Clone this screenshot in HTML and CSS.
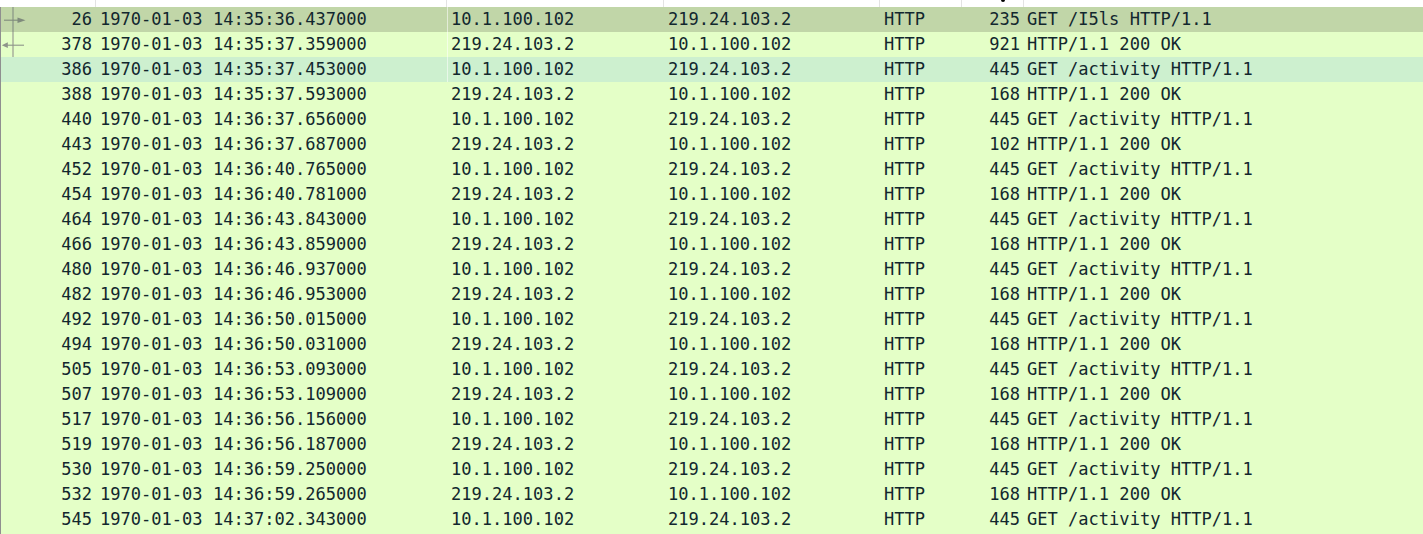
FILE: index.html
```html
<!DOCTYPE html>
<html>
<head>
<meta charset="utf-8">
<link rel="stylesheet" href="styles.css">
</head>
<body>
<div class="header">
  <div class="h"></div><div class="h"></div><div class="h"></div><div class="h"></div><div class="h"></div><div class="h hlen"><span class="dot"></span></div><div class="h hinfo"></div>
</div>
<div class="list">
  <div class="row sel line">
    <span class="c no"><svg class="rel" width="26" height="25" viewBox="0 0 26 25"><line x1="12" y1="0" x2="12" y2="25" stroke="#8d9888" stroke-width="1.3"/><line x1="3" y1="13.2" x2="18" y2="13.2" stroke="#7f8a7c" stroke-width="1.1"/><polygon points="24.5,13.2 16.5,10.5 16.5,16" fill="#7f8a7c"/></svg>26</span>
    <span class="c time">1970-01-03 14:35:36.437000</span><span class="c src">10.1.100.102</span><span class="c dst">219.24.103.2</span><span class="c proto">HTTP</span><span class="c len">235</span><span class="c info">GET /I5ls HTTP/1.1</span>
  </div>
  <div class="row line">
    <span class="c no"><svg class="rel" width="26" height="25" viewBox="0 0 26 25"><line x1="12" y1="0" x2="12" y2="25" stroke="#9ea497" stroke-width="1.3"/><line x1="6" y1="13.2" x2="23" y2="13.2" stroke="#8e948a" stroke-width="1.1"/><polygon points="0.8,13.2 6.8,10.3 6.8,16" fill="#8e948a"/></svg>378</span>
    <span class="c time">1970-01-03 14:35:37.359000</span><span class="c src">219.24.103.2</span><span class="c dst">10.1.100.102</span><span class="c proto">HTTP</span><span class="c len">921</span><span class="c info">HTTP/1.1 200 OK</span>
  </div>
  <div class="row hover line">
    <span class="c no">386</span><span class="c time">1970-01-03 14:35:37.453000</span><span class="c src">10.1.100.102</span><span class="c dst">219.24.103.2</span><span class="c proto">HTTP</span><span class="c len">445</span><span class="c info">GET /activity HTTP/1.1</span>
  </div>
  <div class="row"><span class="c no">388</span><span class="c time">1970-01-03 14:35:37.593000</span><span class="c src">219.24.103.2</span><span class="c dst">10.1.100.102</span><span class="c proto">HTTP</span><span class="c len">168</span><span class="c info">HTTP/1.1 200 OK</span></div>
  <div class="row"><span class="c no">440</span><span class="c time">1970-01-03 14:36:37.656000</span><span class="c src">10.1.100.102</span><span class="c dst">219.24.103.2</span><span class="c proto">HTTP</span><span class="c len">445</span><span class="c info">GET /activity HTTP/1.1</span></div>
  <div class="row"><span class="c no">443</span><span class="c time">1970-01-03 14:36:37.687000</span><span class="c src">219.24.103.2</span><span class="c dst">10.1.100.102</span><span class="c proto">HTTP</span><span class="c len">102</span><span class="c info">HTTP/1.1 200 OK</span></div>
  <div class="row"><span class="c no">452</span><span class="c time">1970-01-03 14:36:40.765000</span><span class="c src">10.1.100.102</span><span class="c dst">219.24.103.2</span><span class="c proto">HTTP</span><span class="c len">445</span><span class="c info">GET /activity HTTP/1.1</span></div>
  <div class="row"><span class="c no">454</span><span class="c time">1970-01-03 14:36:40.781000</span><span class="c src">219.24.103.2</span><span class="c dst">10.1.100.102</span><span class="c proto">HTTP</span><span class="c len">168</span><span class="c info">HTTP/1.1 200 OK</span></div>
  <div class="row"><span class="c no">464</span><span class="c time">1970-01-03 14:36:43.843000</span><span class="c src">10.1.100.102</span><span class="c dst">219.24.103.2</span><span class="c proto">HTTP</span><span class="c len">445</span><span class="c info">GET /activity HTTP/1.1</span></div>
  <div class="row"><span class="c no">466</span><span class="c time">1970-01-03 14:36:43.859000</span><span class="c src">219.24.103.2</span><span class="c dst">10.1.100.102</span><span class="c proto">HTTP</span><span class="c len">168</span><span class="c info">HTTP/1.1 200 OK</span></div>
  <div class="row"><span class="c no">480</span><span class="c time">1970-01-03 14:36:46.937000</span><span class="c src">10.1.100.102</span><span class="c dst">219.24.103.2</span><span class="c proto">HTTP</span><span class="c len">445</span><span class="c info">GET /activity HTTP/1.1</span></div>
  <div class="row"><span class="c no">482</span><span class="c time">1970-01-03 14:36:46.953000</span><span class="c src">219.24.103.2</span><span class="c dst">10.1.100.102</span><span class="c proto">HTTP</span><span class="c len">168</span><span class="c info">HTTP/1.1 200 OK</span></div>
  <div class="row"><span class="c no">492</span><span class="c time">1970-01-03 14:36:50.015000</span><span class="c src">10.1.100.102</span><span class="c dst">219.24.103.2</span><span class="c proto">HTTP</span><span class="c len">445</span><span class="c info">GET /activity HTTP/1.1</span></div>
  <div class="row"><span class="c no">494</span><span class="c time">1970-01-03 14:36:50.031000</span><span class="c src">219.24.103.2</span><span class="c dst">10.1.100.102</span><span class="c proto">HTTP</span><span class="c len">168</span><span class="c info">HTTP/1.1 200 OK</span></div>
  <div class="row"><span class="c no">505</span><span class="c time">1970-01-03 14:36:53.093000</span><span class="c src">10.1.100.102</span><span class="c dst">219.24.103.2</span><span class="c proto">HTTP</span><span class="c len">445</span><span class="c info">GET /activity HTTP/1.1</span></div>
  <div class="row"><span class="c no">507</span><span class="c time">1970-01-03 14:36:53.109000</span><span class="c src">219.24.103.2</span><span class="c dst">10.1.100.102</span><span class="c proto">HTTP</span><span class="c len">168</span><span class="c info">HTTP/1.1 200 OK</span></div>
  <div class="row"><span class="c no">517</span><span class="c time">1970-01-03 14:36:56.156000</span><span class="c src">10.1.100.102</span><span class="c dst">219.24.103.2</span><span class="c proto">HTTP</span><span class="c len">445</span><span class="c info">GET /activity HTTP/1.1</span></div>
  <div class="row"><span class="c no">519</span><span class="c time">1970-01-03 14:36:56.187000</span><span class="c src">219.24.103.2</span><span class="c dst">10.1.100.102</span><span class="c proto">HTTP</span><span class="c len">168</span><span class="c info">HTTP/1.1 200 OK</span></div>
  <div class="row"><span class="c no">530</span><span class="c time">1970-01-03 14:36:59.250000</span><span class="c src">10.1.100.102</span><span class="c dst">219.24.103.2</span><span class="c proto">HTTP</span><span class="c len">445</span><span class="c info">GET /activity HTTP/1.1</span></div>
  <div class="row"><span class="c no">532</span><span class="c time">1970-01-03 14:36:59.265000</span><span class="c src">219.24.103.2</span><span class="c dst">10.1.100.102</span><span class="c proto">HTTP</span><span class="c len">168</span><span class="c info">HTTP/1.1 200 OK</span></div>
  <div class="row"><span class="c no">545</span><span class="c time">1970-01-03 14:37:02.343000</span><span class="c src">10.1.100.102</span><span class="c dst">219.24.103.2</span><span class="c proto">HTTP</span><span class="c len">445</span><span class="c info">GET /activity HTTP/1.1</span></div>
</div>
</body>
</html>
```
FILE: styles.css
```css
html, body {
  margin: 0;
  padding: 0;
  height: 100%;
  background: #e4ffc7;
  overflow: hidden;
}
body {
  display: flex;
  flex-direction: column;
}
.header {
  height: 7px;
  flex: none;
  background: #ffffff;
  display: grid;
  grid-template-columns: 96px 351px 217px 216px 82px 62px 1fr;
  overflow: hidden;
}
.h {
  border-right: 1px solid #e3e3e3;
  position: relative;
}
.hinfo { border-right: none; }
.dot {
  position: absolute;
  left: 39px;
  top: -1px;
  width: 4px;
  height: 3px;
  border-radius: 0 0 2px 2px;
  background: #000;
}
.list {
  flex: 1;
  border-left: 1px solid #8f8f8f;
  background: #e4ffc7;
  font-family: "DejaVu Sans Mono", "Liberation Mono", monospace;
  font-size: 17.06px;
  color: #12272e;
}
.row {
  display: grid;
  grid-template-columns: 95px 351px 217px 216px 82px 62px 1fr;
  height: 25px;
  line-height: 25px;
  white-space: nowrap;
}
.row.sel { background: #c1d6a8; }
.row.hover { background: #cdf0cf; }
.row.line .src { box-shadow: inset 1px 0 0 rgba(255, 255, 255, 0.55); }
.c {
  padding: 0 4px;
  overflow: hidden;
}
.no {
  display: flex;
  justify-content: flex-end;
  padding-left: 0;
}
.rel {
  margin-right: auto;
  flex: none;
}
.len { text-align: right; }
.info { padding-left: 3px; }
```
